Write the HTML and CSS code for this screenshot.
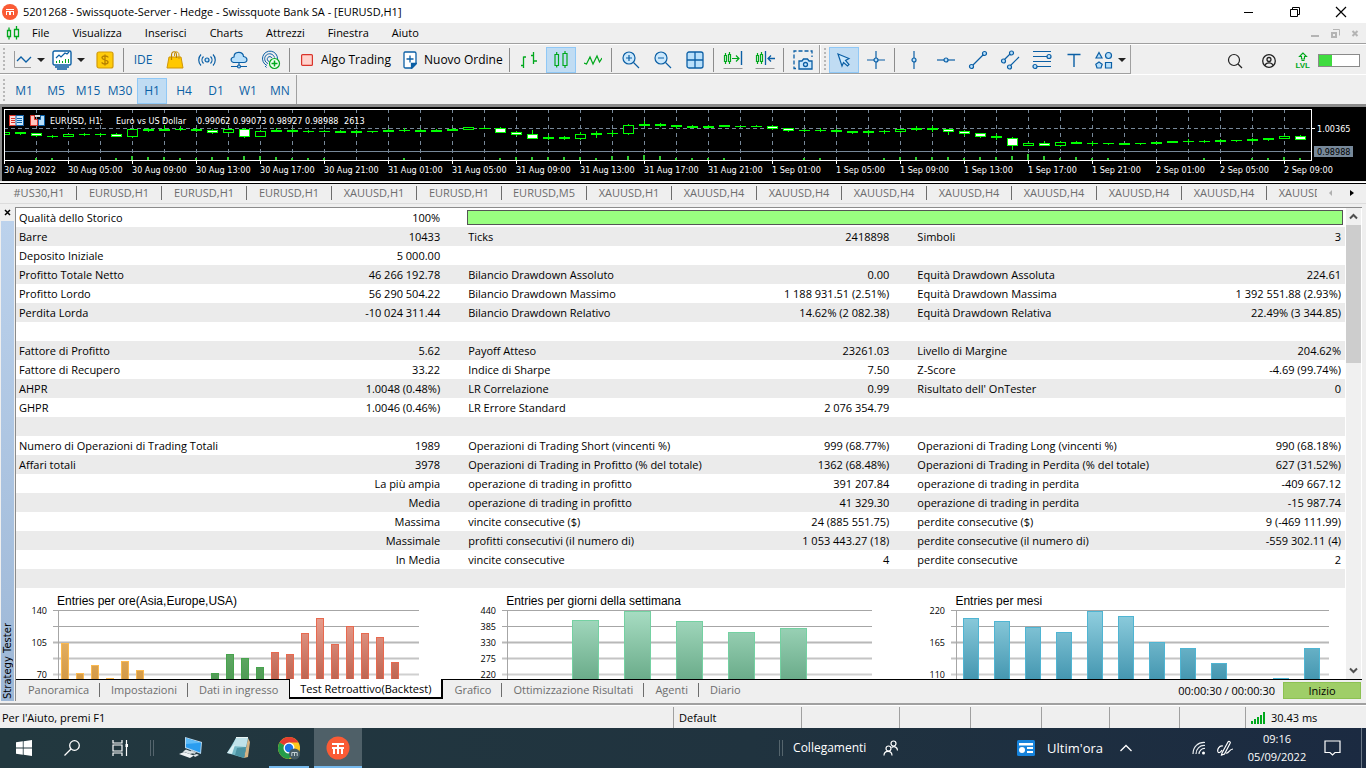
FILE: index.html
```html
<!DOCTYPE html>
<html lang="it">
<head>
<meta charset="utf-8">
<title>5201268 - Swissquote-Server - Hedge</title>
<link rel="stylesheet" href="styles.css">
</head>
<body>
<div class="app">
  <header class="titlebar">
    <svg class="logo" width="16" height="16" viewBox="0 0 16 16"><circle cx="8" cy="8" r="8" fill="#fa5b35"/><path d="M4 5h8v1H4zM4 7h8v1H4zM4 8h1v3H4zM7 8h2v3H7zM11 8h1v3h-1z" fill="#fff" shape-rendering="crispEdges"/></svg>
    <h1 class="title">5201268 - Swissquote-Server - Hedge - Swissquote Bank SA - [EURUSD,H1]</h1>
    <div class="window-controls">
      <button aria-label="Riduci"><svg width="12" height="12"><path d="M1 6.500h9" stroke="#000"/></svg></button>
      <button aria-label="Ripristina"><svg width="12" height="12" fill="none" stroke="#000"><path d="M1.500 3.500h7v7h-7zM3.500 3V1.500h7v7H9"/></svg></button>
      <button aria-label="Chiudi"><svg width="12" height="12"><path d="M1 1l10 10M11 1L1 11" stroke="#000" stroke-width="1.2"/></svg></button>
    </div>
  </header>

  <nav class="menubar">
    <svg class="menu-icon" width="14" height="14" fill="none" stroke="#00a81c" stroke-width="1.3"><path d="M1.500 4.500h3v6h-3zM3 1.500v3M3 10.500v3M8.500 3.500h4v7h-4zM10.500 0v3.500M10.500 10.500v3"/></svg>
    <button>File</button><button>Visualizza</button><button>Inserisci</button><button>Charts</button><button>Attrezzi</button><button>Finestra</button><button>Aiuto</button>
    <div class="mdi-controls">
      <svg width="9" height="9"><path d="M0 7h8" stroke="#b4b4b4" stroke-width="2"/></svg>
      <svg width="9" height="9" fill="none" stroke="#b4b4b4"><path d="M1 4h4v4H1z" stroke-width="2"/><path d="M2 .5h6.500v6"/></svg>
      <svg width="9" height="9"><path d="M1.500 2l5 5M6.500 2l-5 5" stroke="#b4b4b4" stroke-width="2"/></svg>
    </div>
  </nav>

  <div class="toolbar-row">
    <div class="toolbar">
      <span class="grip"></span>
      <button class="drop" aria-label="Grafici"><svg width="20" height="18" fill="none"><path d="M2.500 0v16.500H19" stroke="#9b9b9b"/><path d="M5 10l4-4 5 5 5-5" stroke="#0b5fa5" stroke-width="1.3"/></svg><i class="caret"></i></button>
      <button class="drop wide" aria-label="Indicatori"><svg width="20" height="20" fill="none" stroke="#0b5fa5"><rect x="1" y="1" width="18" height="14" rx="1.500" fill="#fff" stroke-width="1.4"/><path d="M4 8l3-3 2 2 4-4 2 1 2-2" stroke-width="1.200"/><path d="M4.500 13v-2M7.500 13v-3M10.500 13v-2M13.500 13v-4M16.500 13v-4" stroke="#00a81c"/><path d="M3 17h14M5 19h10" stroke-width="1.500"/></svg><i class="caret"></i></button>
      <button class="tool" aria-label="Simboli"><svg width="18" height="18"><rect x="1" y="1" width="16" height="16" rx="2" fill="#ffcc0a" stroke="#d39b07" stroke-width="1.2"/><path d="M12 6.500C12 4.500 6 4.500 6 6.800S12 8.800 12 11.200 6 13.500 6 11.300M9 3.500v11" fill="none" stroke="#b98300" stroke-width="1.4"/></svg></button>
      <span class="sep"></span>
      <button class="tool ide">IDE</button>
      <button class="tool" aria-label="Market"><svg width="18" height="20"><path d="M3 7h12l2 11H1z" fill="#ffc800" stroke="#cf9508"/><path d="M5.500 10V5.500c0-5 5-5 5 0V8" fill="none" stroke="#b98300" stroke-width="1.200"/><path d="M8.500 6V4c0-3 4.500-3 4.500 1v4" fill="none" stroke="#cf9508"/></svg></button>
      <button class="tool" aria-label="Segnali"><svg width="18" height="14" fill="none" stroke="#0b5fa5" stroke-width="1.200"><circle cx="9" cy="7" r="2" fill="#bfe3fb"/><path d="M5.500 3.500c-2 2-2 5 0 7M12.500 3.500c2 2 2 5 0 7M3 1.500c-3 3-3 8 0 11M15 1.500c3 3 3 8 0 11"/></svg></button>
      <button class="tool" aria-label="VPS"><svg width="18" height="18" fill="none" stroke="#0b5fa5" stroke-width="1.200"><path d="M5 11.500C0 11.500 0 6.500 4 6c0-6 9-6 9.500-.5 4.500.5 4.500 6 .5 6z" fill="#b9e0fb"/><path d="M9 12v3M1 15.500h6M11 15.500h6"/><circle cx="9" cy="15.500" r="1.500" fill="#b9e0fb"/></svg></button>
      <button class="tool" aria-label="Depositi"><svg width="20" height="20" fill="none" stroke="#0b5fa5"><path d="M6 15.500A7.500 7.500 0 1 1 16.500 9M7 13.500a5 5 0 1 1 6.500-6M8 11.500a2.500 2.500 0 1 1 3-3.500M4 16l1.500 1.500"/><circle cx="13.500" cy="13.500" r="5" fill="#effff0" stroke="#00a81c" stroke-width="1.200"/><path d="M10.500 13.500h6M13.500 10.500v6" stroke="#00a81c" stroke-width="1.500"/></svg></button>
      <span class="sep"></span>
      <button class="labelled algo"><svg width="12" height="12"><rect x=".6" y=".6" width="10.800" height="10.800" rx="1" fill="#ffd3cd" stroke="#d9342b" stroke-width="1.200"/></svg>Algo Trading</button>
      <button class="labelled order"><svg width="14" height="18" fill="none" stroke="#0b5fa5" stroke-width="1.300"><path d="M2 1h9.500q1.500 0 1.500 1.500V13l-4 4H2.500Q1 17 1 15.500v-13Q1 1 2 1z" fill="#fff"/><path d="M13 12.500L8.500 17v-4.500z" fill="#0b5fa5"/><path d="M3.500 8h7M7 4.500v7"/></svg>Nuovo Ordine</button>
      <span class="sep"></span>
      <button class="tool" aria-label="Barre"><svg width="18" height="18" fill="none" stroke="#00a81c" stroke-width="1.300"><path d="M3.500 17V5.500M3.500 6H6M1 14.500h2.500M13.500 13V1M11 4.500h2.500M13.500 10H17"/></svg></button>
      <button class="tool active" aria-label="Candele"><svg width="16" height="18" fill="none" stroke="#00a81c" stroke-width="1.200"><path d="M2 3.500h3.500v11H2zM3.700 1v2.500M3.700 14.500v2M10 2.500h4v12h-4zM12 0v2.500M12 14.500V17"/></svg></button>
      <button class="tool" aria-label="Linea"><svg width="18" height="14" fill="none" stroke="#00a81c" stroke-width="1.200"><path d="M0 10l2.500 1L6 4l3 7 4-8 2.500 6L18 5"/></svg></button>
      <span class="sep"></span>
      <button class="tool" aria-label="Ingrandisci"><svg width="18" height="18" fill="none" stroke="#0b5fa5" stroke-width="1.200"><circle cx="7" cy="7" r="6" fill="#cbe8fc"/><path d="M11.500 11.500l5.500 5.500M4 7h6M7 4v6"/></svg></button>
      <button class="tool" aria-label="Riduci"><svg width="18" height="18" fill="none" stroke="#0b5fa5" stroke-width="1.200"><circle cx="7" cy="7" r="6" fill="#cbe8fc"/><path d="M11.500 11.500l5.500 5.500M4 7h6"/></svg></button>
      <button class="tool" aria-label="Affianca"><svg width="18" height="18" fill="none" stroke="#0b5fa5" stroke-width="1.300"><rect x="1" y="1" width="16" height="16" rx="2" fill="#b9e0fb"/><path d="M9 1v16M1 9h16"/></svg></button>
      <span class="sep"></span>
      <button class="tool" aria-label="Scorrimento"><svg width="20" height="18" fill="none" stroke="#00a81c"><path d="M1.500 4.500h2v6h-2zM2.500 2v2.500M2.500 10.500V13M5.500 3.500h2v7h-2zM6.500 1v2.500M6.500 10.500V13M9 7.500h7M13 4.500l3 3-3 3" stroke-width="1.200"/><path d="M18.500 0v14" stroke="#0b5fa5" stroke-width="1.400"/><path d="M.5 17.500h19" stroke="#999"/></svg></button>
      <button class="tool" aria-label="Spostamento"><svg width="20" height="18" fill="none" stroke="#00a81c"><path d="M1.500 4.500h2v6h-2zM2.500 2v2.500M2.500 10.500V13M5.500 3.500h2v7h-2zM6.500 1v2.500M6.500 10.500V13" stroke-width="1.200"/><path d="M10.500 0v14M20 7.500h-7M16 4.500l-3 3 3 3" stroke="#0b5fa5" stroke-width="1.300"/><path d="M.5 17.500h19" stroke="#999"/></svg></button>
      <span class="sep"></span>
      <button class="tool" aria-label="Istantanea"><svg width="20" height="20" fill="none" stroke="#0b5fa5" stroke-width="1.300"><path d="M3 18.500H1V1h18v6" stroke-dasharray="4 2"/><path d="M6 11h3l1.500-2h4l1.500 2h3v8H6z" fill="#cbe8fc"/><circle cx="12.500" cy="14.500" r="2"/></svg></button>
    </div>
    <div class="toolbar">
      <span class="grip"></span>
      <button class="tool active" aria-label="Cursore"><svg width="16" height="16"><path d="M2 2l11 4.500-3.500 2 3.500 4-1.500 1.500-4-3.500-1.500 3.500z" fill="#cbe8fc" stroke="#0b5fa5" stroke-width="1.200"/></svg></button>
      <button class="tool" aria-label="Mirino"><svg width="18" height="18" fill="none" stroke="#0b5fa5" stroke-width="1.200"><path d="M9 0v18M0 9h18"/><circle cx="9" cy="9" r="2" fill="#b9e0fb"/></svg></button>
      <span class="sep"></span>
      <button class="tool" aria-label="Linea verticale"><svg width="18" height="20" fill="none" stroke="#0b5fa5" stroke-width="1.200"><path d="M9 1v18"/><circle cx="9" cy="10" r="2" fill="#b9e0fb"/></svg></button>
      <button class="tool" aria-label="Linea orizzontale"><svg width="20" height="18" fill="none" stroke="#0b5fa5" stroke-width="1.200"><path d="M1 9h18"/><circle cx="10" cy="9" r="2" fill="#b9e0fb"/></svg></button>
      <button class="tool" aria-label="Trend"><svg width="20" height="20" fill="none" stroke="#0b5fa5" stroke-width="1.200"><path d="M4 16L16 4"/><circle cx="3.500" cy="16.500" r="2" fill="#b9e0fb"/><circle cx="16.500" cy="3.500" r="2" fill="#b9e0fb"/></svg></button>
      <button class="tool" aria-label="Canale"><svg width="20" height="20" fill="none" stroke="#0b5fa5" stroke-width="1.200"><path d="M4 10l7-7M10 16l9-9"/><circle cx="3.500" cy="11" r="2" fill="#b9e0fb"/><circle cx="11.500" cy="3" r="2" fill="#b9e0fb"/><circle cx="9.500" cy="17" r="2" fill="#b9e0fb"/></svg></button>
      <button class="tool" aria-label="Fibonacci"><svg width="20" height="20" fill="none" stroke="#0b5fa5" stroke-width="1.200"><path d="M1 1.500h18M1 6.500h18M1 11.500h18M1 16.500h18"/><circle cx="17" cy="6.500" r="2" fill="#b9e0fb"/><circle cx="3" cy="16.500" r="2" fill="#b9e0fb"/></svg></button>
      <button class="tool" aria-label="Testo"><svg width="16" height="16" fill="none" stroke="#0b5fa5" stroke-width="1.400"><path d="M1.500 2.500h13M8 2.500V15"/></svg></button>
      <button class="drop" aria-label="Oggetti"><svg width="18" height="18" fill="#b9e0fb" stroke="#0b5fa5" stroke-width="1.200"><path d="M4 1.500L7 7H1z"/><circle cx="13.500" cy="4.500" r="3"/><path d="M4 11l3.200 2.300L6 17H2L.8 13.300z"/><path d="M10.500 11.500h6v5.500h-6z"/></svg><i class="caret"></i></button>
    </div>
    <div class="toolbar-right">
      <svg width="16" height="16" fill="none" stroke="#222" stroke-width="1.200"><circle cx="7" cy="7" r="5.500"/><path d="M11 11l4 4"/></svg>
      <svg width="16" height="16" fill="none" stroke="#222" stroke-width="1.300"><circle cx="8" cy="8" r="6.300"/><circle cx="8" cy="6.500" r="2"/><path d="M4 12.500c1-3.500 7-3.500 8 0"/></svg>
      <div class="lvl"><svg width="10" height="10" fill="none" stroke="#00a81c" stroke-width="1.100"><path d="M5 1L1.500 4.500h2V7h3V4.500h2zM3.500 8.500h3"/></svg><span>LVL</span></div>
      <progress class="level" max="100" value="32" aria-label="Livello"></progress>
    </div>
  </div>

  <div class="toolbar-row frames-row">
    <div class="toolbar frames">
      <span class="grip"></span>
      <button class="tool">M1</button><button class="tool">M5</button><button class="tool">M15</button><button class="tool">M30</button><button class="tool active">H1</button><button class="tool">H4</button><button class="tool">D1</button><button class="tool">W1</button><button class="tool">MN</button>
    </div>
  </div>

  <section class="price-chart">
    <svg id="price" width="100%" height="74" role="img" aria-label="EURUSD H1"></svg>
  </section>

  <nav class="chart-tabs">
    <div class="tab-strip">
      <button>#US30,H1</button><button>EURUSD,H1</button><button>EURUSD,H1</button><button>EURUSD,H1</button><button>XAUUSD,H1</button><button>EURUSD,H1</button><button>EURUSD,M5</button><button>XAUUSD,H1</button><button>XAUUSD,H4</button><button>XAUUSD,H4</button><button>XAUUSD,H4</button><button>XAUUSD,H4</button><button>XAUUSD,H4</button><button>XAUUSD,H4</button><button>XAUUSD,H4</button><button>XAUUSD,H4</button>
    </div>
    <button class="arrow" aria-label="Indietro"><svg width="6" height="8"><path d="M4 1v6L1 4z" fill="#b0b0b0"/></svg></button>
    <button class="arrow" aria-label="Avanti"><svg width="6" height="8"><path d="M1 1v6l4-3z" fill="#000"/></svg></button>
  </nav>

  <main class="tester">
    <aside class="dock">
      <button class="dock-close" aria-label="Chiudi"><svg width="7" height="7"><path d="M1 1l5 5M6 1L1 6" stroke="#000" stroke-width="1.500"/></svg></button>
      <div class="dock-title"><span>Strategy Tester</span></div>
    </aside>
    <div class="tester-body">
      <div class="report-wrap">
        <div class="report">
          <table class="stats">
            <colgroup><col class="c1"><col class="c2"><col class="c1"><col class="c2"><col class="c1"><col class="c3"></colgroup>
            <tbody>
              <tr><td>Qualità dello Storico</td><td>100%</td><td colspan="4" class="quality"><div class="quality-bar"></div></td></tr>
              <tr><td>Barre</td><td>10433</td><td>Ticks</td><td>2418898</td><td>Simboli</td><td>3</td></tr>
              <tr><td>Deposito Iniziale</td><td>5 000.00</td><td></td><td></td><td></td><td></td></tr>
              <tr><td>Profitto Totale Netto</td><td>46 266 192.78</td><td>Bilancio Drawdown Assoluto</td><td>0.00</td><td>Equità Drawdown Assoluta</td><td>224.61</td></tr>
              <tr><td>Profitto Lordo</td><td>56 290 504.22</td><td>Bilancio Drawdown Massimo</td><td>1 188 931.51 (2.51%)</td><td>Equità Drawdown Massima</td><td>1 392 551.88 (2.93%)</td></tr>
              <tr><td>Perdita Lorda</td><td>-10 024 311.44</td><td>Bilancio Drawdown Relativo</td><td>14.62% (2 082.38)</td><td>Equità Drawdown Relativa</td><td>22.49% (3 344.85)</td></tr>
              <tr><td></td><td></td><td></td><td></td><td></td><td></td></tr>
              <tr><td>Fattore di Profitto</td><td>5.62</td><td>Payoff Atteso</td><td>23261.03</td><td>Livello di Margine</td><td>204.62%</td></tr>
              <tr><td>Fattore di Recupero</td><td>33.22</td><td>Indice di Sharpe</td><td>7.50</td><td>Z-Score</td><td>-4.69 (99.74%)</td></tr>
              <tr><td>AHPR</td><td>1.0048 (0.48%)</td><td>LR Correlazione</td><td>0.99</td><td>Risultato dell' OnTester</td><td>0</td></tr>
              <tr><td>GHPR</td><td>1.0046 (0.46%)</td><td>LR Errore Standard</td><td>2 076 354.79</td><td></td><td></td></tr>
              <tr><td></td><td></td><td></td><td></td><td></td><td></td></tr>
              <tr><td>Numero di Operazioni di Trading Totali</td><td>1989</td><td>Operazioni di Trading Short (vincenti %)</td><td>999 (68.77%)</td><td>Operazioni di Trading Long (vincenti %)</td><td>990 (68.18%)</td></tr>
              <tr><td>Affari totali</td><td>3978</td><td>Operazioni di Trading in Profitto (% del totale)</td><td>1362 (68.48%)</td><td>Operazioni di Trading in Perdita (% del totale)</td><td>627 (31.52%)</td></tr>
              <tr><td></td><td>La più ampia</td><td>operazione di trading in profitto</td><td>391 207.84</td><td>operazione di trading in perdita</td><td>-409 667.12</td></tr>
              <tr><td></td><td>Media</td><td>operazione di trading in profitto</td><td>41 329.30</td><td>operazione di trading in perdita</td><td>-15 987.74</td></tr>
              <tr><td></td><td>Massima</td><td>vincite consecutive ($)</td><td>24 (885 551.75)</td><td>perdite consecutive ($)</td><td>9 (-469 111.99)</td></tr>
              <tr><td></td><td>Massimale</td><td>profitti consecutivi (il numero di)</td><td>1 053 443.27 (18)</td><td>perdite consecutive (il numero di)</td><td>-559 302.11 (4)</td></tr>
              <tr><td></td><td>In Media</td><td>vincite consecutive</td><td>4</td><td>perdite consecutive</td><td>2</td></tr>
              <tr><td></td><td></td><td></td><td></td><td></td><td></td></tr>
            </tbody>
          </table>
          <div class="entries">
            <figure><figcaption>Entries per ore(Asia,Europe,USA)</figcaption><svg id="hours" width="100%" height="200"></svg></figure>
            <figure><figcaption>Entries per giorni della settimana</figcaption><svg id="days" width="100%" height="200"></svg></figure>
            <figure><figcaption>Entries per mesi</figcaption><svg id="months" width="100%" height="200"></svg></figure>
          </div>
        </div>
        <div class="scrollbar">
          <button aria-label="Su"><svg width="9" height="7" fill="none" stroke="#505050" stroke-width="2"><path d="M1 5.500l3.500-3.500L8 5.500"/></svg></button>
          <div class="thumb"></div>
          <button aria-label="Giù"><svg width="9" height="7" fill="none" stroke="#505050" stroke-width="2"><path d="M1 1.500L4.500 5 8 1.500"/></svg></button>
        </div>
      </div>
      <div class="tester-foot">
        <nav class="tester-tabs">
          <button>Panoramica</button><button>Impostazioni</button><button class="last">Dati in ingresso</button><button class="current">Test Retroattivo(Backtest)</button><button>Grafico</button><button>Ottimizzazione Risultati</button><button>Agenti</button><button class="last">Diario</button>
        </nav>
        <span class="elapsed">00:00:30 / 00:00:30</span>
        <button class="start">Inizio</button>
      </div>
    </div>
  </main>

  <footer class="status">
    <span class="help">Per l'Aiuto, premi F1</span>
    <span class="profile">Default</span>
    <span class="s98"></span><span class="s71"></span><span class="s71"></span><span class="s68"></span><span class="s70"></span><span class="s66"></span>
    <span class="ping"><svg width="14" height="12" stroke="#00a81c" stroke-width="2"><path d="M1 12V9M4 12V7M7 12V5M10 12V3M13 12V0"/></svg>30.43 ms</span>
  </footer>

  <footer class="taskbar">
    <button aria-label="Start"><svg width="16" height="16" fill="#fff"><path d="M0 2.300L6.800 1.300V7.600H0zM7.600 1.200L16 0v7.600H7.600zM0 8.400h6.800v6.300L0 13.700zM7.600 8.400H16V16l-8.400-1.200z"/></svg></button>
    <button aria-label="Cerca"><svg width="16" height="16" fill="none" stroke="#fff" stroke-width="1.300"><circle cx="10.500" cy="5.500" r="4.800"/><path d="M7 9L.5 15.500"/></svg></button>
    <button aria-label="Attività"><svg width="17" height="16" fill="none" stroke="#fff" stroke-width="1.200"><path d="M1 0v3h9V0M1 16v-3h9v3M1 5h9v6H1zM14.500 0v16"/><path d="M13.500 4h2.500v3h-2.500z" fill="#fff" stroke="none"/></svg></button>
    <span class="handle"></span>
    <button aria-label="Computer"><svg width="24" height="24"><path d="M6 1l17 5-1 12-16-6z" fill="#b9d9ef"/><path d="M7 2.200L22 6.700 21.200 16.500 7 11.300z" fill="#2a9df0"/><path d="M7 2.200L22 6.700 7 8z" fill="#5fbcf8"/><path d="M12 14l5 2-1 2-5-1z" fill="#c4ccd1"/><path d="M7 13.500l8 3-4 1.500-7-2.500z" fill="#dfe5e8"/><path d="M0 18l5-2 10 3.500-4 2.500z" fill="#eef1f3"/><path d="M14 19l4-1 2 1-4 2z" fill="#dfe5e8"/></svg></button>
    <button aria-label="Blocco note"><svg width="24" height="24"><path d="M21 2l2 4-2 15-4 1z" fill="#d5b384"/><path d="M9 2h12l-4 20L0 17z" fill="#74b8c6"/><path d="M9 2h12l-2 9L5 10z" fill="#bfe2ea"/><path d="M5 10l3-1-3 9-5-1z" fill="#d9eff3"/><path d="M10 12l9-1-2 11-9-3z" fill="#4b93a3"/><path d="M9 2h12v-1H9z" fill="#e9f4f4"/></svg></button>
    <button class="running" aria-label="Chrome"><svg width="24" height="24"><circle cx="12" cy="12" r="11" fill="#fbc91f"/><path d="M12 12L2.500 6.500A11 11 0 0 1 21.500 6.500H12z" fill="#e43d30"/><path d="M12 12L2.500 6.500A11 11 0 0 0 12 23l5-8z" fill="#259b4a"/><circle cx="12" cy="12" r="5.500" fill="#fff"/><circle cx="12" cy="12" r="4.200" fill="#1a73e8"/><circle cx="17.500" cy="18" r="5.500" fill="#455a64"/><path d="M14.800 20v-3.500h5.400V20M17.500 16.500V20" stroke="#c5d0d5" fill="none"/></svg></button>
    <button class="focused" aria-label="MetaTrader 5"><svg width="24" height="24"><circle cx="12" cy="12" r="11.500" fill="#fa5b35"/><path d="M6 7h12v2H6zM6 11h12v2H6zM7 13h2v5H7zM11 9h2v9h-2zM15 13h2v5h-2z" fill="#fff" shape-rendering="crispEdges"/></svg></button>
    <span class="spacer"></span>
    <span class="handle"></span>
    <span class="links">Collegamenti</span>
    <button class="people" aria-label="Contatti"><svg width="16" height="16" fill="none" stroke="#fff" stroke-width="1.200"><circle cx="10.500" cy="3.500" r="2.500"/><circle cx="5.500" cy="8.500" r="2.500"/><path d="M1 15.500c0-5.500 8-5.500 8 0M8.500 7.500c3-2 6 0 6 3"/></svg></button>
    <button class="news"><svg width="19" height="16"><rect width="18" height="16" rx="1.500" fill="#1683dc"/><path d="M2 3h14v2.500H2z" fill="#fff"/><circle cx="5" cy="10" r="3" fill="#fff"/><path d="M10 8h6M10 12h6" stroke="#fff" stroke-width="1.800"/></svg><span>Ultim'ora</span></button>
    <button class="chevron" aria-label="Mostra icone"><svg width="12" height="8" fill="none" stroke="#fff" stroke-width="1.300"><path d="M.5 7L6 1.500 11.500 7"/></svg></button>
    <span class="tray">
      <svg width="14" height="14" fill="none" stroke="#e9edf0" stroke-width="1.200"><path d="M1 13C1 6 6 1 13 1.500M4 13c0-5 4-9 9-8.500M7 13c0-3 3-6 6-5.500"/><circle cx="11.500" cy="12" r="1.500" fill="#fff" stroke="none"/></svg>
      <svg width="17" height="16" fill="none" stroke="#fff" stroke-width="1.200"><path d="M5 13l6-11c1-1.500 3 0 2 1.500L7.500 14l-3 1zM6 6c-4-1-6 4-5 6 1 1.500 3 0 4-2M9 13c3 1 3-4 7-4"/></svg>
    </span>
    <time class="clock"><span>09:16</span><span>05/09/2022</span></time>
    <button class="notify" aria-label="Notifiche"><svg width="17" height="16" fill="none" stroke="#fff" stroke-width="1.200"><path d="M1 1h15v11.500h-5L8.500 15 6 12.500H1z"/></svg></button>
    <span class="peek"></span>
  </footer>
</div>
<script src="app.js"></script>
</body>
</html>
```
FILE: styles.css
```css
* { box-sizing: border-box; }
body { margin: 0; background: #efefef; color: #000; font: 11px/16px "Open Sans", "Noto Sans", sans-serif; }
button { font: inherit; color: inherit; background: none; border: 0; padding: 0; margin: 0; }
svg { display: block; flex: none; }
.app { height: 100vh; display: flex; flex-direction: column; overflow: hidden; }
.app > * { flex: none; }

.titlebar { height: 23px; display: flex; align-items: center; background: #fff; padding-left: 2px; }
.title { margin: 0 auto 0 5px; font-size: 11px; font-weight: 400; white-space: nowrap; }
.window-controls { display: flex; padding-right: 2px; }
.window-controls button { width: 46px; height: 22px; display: grid; place-items: center; }

.menubar { height: 21px; display: flex; align-items: center; border-bottom: 1px solid #a0a0a0; padding-left: 6px; }
.menu-icon { margin-right: 3px; }
.menubar button { padding: 0 9px; margin-right: 5px; }
.mdi-controls { margin-left: auto; display: flex; gap: 11px; padding-right: 6px; }

.toolbar-row { height: 31px; display: flex; align-items: stretch; border-top: 1px solid #fff; border-bottom: 1px solid #fff; }
.toolbar { display: flex; align-items: center; border-right: 1px solid #a0a0a0; border-bottom: 1px solid #a0a0a0; padding-top: 1px; }
.toolbar + .toolbar { border-left: 1px solid #fff; }
.grip { width: 2px; height: 24px; margin: 0 3px; background: repeating-linear-gradient(#b8b8b8 0 2px, transparent 2px 4px); }
.toolbar + .toolbar .grip { margin-right: 2px; }
.tool, .drop { height: 26px; display: grid; place-items: center; }
.tool { width: 30px; margin: 0 1px; color: #0b5fa5; }
.tool.active { background: #c0dcf3; border: 1px solid #90c8f6; }
.drop { width: 40px; display: flex; align-items: center; justify-content: center; gap: 5px; }
.drop.wide { width: 41px; }
.caret { border: 4px solid transparent; border-top-color: #222; border-bottom: 0; }
.ide { font-size: 12px; }
.sep { width: 1px; height: 24px; margin: 0 3px 0 2px; background: #8c8c8c; }
.labelled { display: flex; align-items: center; font-size: 12px; white-space: nowrap; }
.algo { width: 103px; gap: 8px; padding-left: 8px; }
.order { width: 111px; gap: 7px; padding-left: 7px; }
.toolbar-right { margin-left: auto; display: flex; align-items: center; gap: 18px; padding: 2px 6px 0 0; }
.lvl { display: grid; justify-items: center; color: #00a81c; font: 700 8px/8px "Liberation Sans", sans-serif; margin-right: -10px; }
.level { appearance: none; width: 42px; height: 13px; border: 1px solid #8a8a8a; background: #fff; }
.level::-webkit-progress-bar { background: #fff; }
.level::-webkit-progress-value { background: #3fdc3f; }
.frames-row { height: 29px; border: 0; }
.frames { border-bottom: 0; padding-top: 2px; }
.frames .tool { font-size: 12px; }

.price-chart { border-top: 3px solid #8b8b8b; border-left: 2px solid #8b8b8b; background: #000; font: 9px/12px "DejaVu Sans Condensed", "DejaVu Sans", sans-serif; }
.price-chart text { fill: #fff; }
.price-chart .last-price { fill: #000; }

.chart-tabs { height: 22px; display: flex; border-top: 1px solid #fff; border-bottom: 1px solid #dcdcdc; margin-top: 1px; box-shadow: inset 0 1px #000; padding-right: 4px; }
.tab-strip { flex: 1; display: flex; align-items: center; overflow: hidden; color: #6d6d6d; padding-left: 2px; margin-right: 3px; }
.tab-strip button { flex: 0 0 85px; height: 14px; line-height: 14px; border-right: 1px solid #6d6d6d; white-space: nowrap; }
.tab-strip button:first-child { flex-basis: 75px; }
.arrow { width: 21px; display: grid; place-items: center; }

.app > .tester { flex: 1; min-height: 0; display: flex; padding: 3px 0 2px; }
.dock { width: 15px; display: flex; flex-direction: column; padding: 0 1px; }
.dock-close { height: 14px; display: grid; place-items: start center; padding-top: 2px; }
.dock-title { flex: 1; background: linear-gradient(#bcd2ec, #9db7d6); display: flex; align-items: flex-end; justify-content: center; padding-bottom: 2px; }
.dock-title span { writing-mode: vertical-rl; transform: rotate(180deg); font: 10px/13px "DejaVu Sans", sans-serif; white-space: nowrap; }
.tester-body { flex: 1; min-width: 0; display: flex; flex-direction: column; border-left: 1px solid #8b8b8b; }
.report-wrap { flex: 1; min-height: 0; display: flex; border-top: 1px solid #8b8b8b; border-bottom: 1px solid #000; background: #fff; margin-right: 4px; }
.report { flex: 1; min-width: 0; overflow: hidden; }
.stats { width: 100%; table-layout: fixed; border-collapse: collapse; }
.c1 { width: 19.6%; }
.c2 { width: 14.2%; }
.stats tr:nth-child(even) { background: #ebebeb; }
.stats td { height: 19px; padding: 2px 0 1px 3px; line-height: 16px; white-space: nowrap; }
.stats td:nth-child(even) { text-align: right; padding: 2px 25px 1px 0; }
.stats td:last-child { padding-right: 4px; }
.stats td.quality { padding: 0 2px; }
.quality-bar { height: 15px; background: #99ff80; border: 1px solid #555; }
.entries { display: grid; grid-template-columns: 33.8% 33.8% 1fr; padding-top: 5px; }
.entries figure { margin: 0; min-width: 0; }
.entries svg { overflow: visible; }
figcaption { padding-left: 41px; font: 12px/16px "Liberation Sans", sans-serif; }
.entries text { font-size: 9px; }
.scrollbar { width: 17px; display: flex; flex-direction: column; background: #f0f0f0; border-left: 1px solid #fff; border-right: 1px solid #fff; }
.scrollbar button { height: 17px; display: grid; place-items: center; }
.thumb { height: 138px; margin-bottom: auto; background: #cdcdcd; }

.tester-foot { height: 21px; display: flex; align-items: center; padding-right: 5px; }
.tester-tabs { align-self: flex-start; display: flex; align-items: flex-start; margin-right: auto; padding-left: 1px; color: #6d6d6d; }
.tester-tabs button { height: 14px; line-height: 14px; margin-top: 3px; padding: 0 10px 0 11px; border-right: 1px solid #6d6d6d; white-space: nowrap; }
.tester-tabs .last { border-right: 0; }
.tester-tabs .current { height: 20px; margin: -1px 0 0 1px; line-height: 20px; color: #000; background: #fff; border: 1px solid #000; border-top: 0; padding: 0 10px; border-right-width: 2px; border-bottom-width: 2px; }
.elapsed { margin-right: 8px; }
.start { width: 78px; height: 17px; line-height: 15px; background: #9fce68; border: 1px solid #8cc152; }

.status { height: 25px; display: flex; align-items: stretch; border-top: 2px solid #a0a0a0; line-height: 22px; padding-top: 2px; box-shadow: inset 0 1px #fff; }
.status span { border-left: 1px solid #a0a0a0; padding-left: 5px; }
.status .help { flex: 1; border: 0; padding-left: 2px; }
.profile { width: 128px; }
.s98 { width: 98px; } .s71 { width: 71px; } .s68 { width: 68px; } .s70 { width: 70px; } .s66 { width: 66px; }
.ping { width: 121px; display: flex; align-items: center; gap: 6px; }

.taskbar { height: 40px; display: flex; align-items: center; background: linear-gradient(90deg, #22383f, #20333f 55%, #1b2a41); color: #fff; }
.taskbar button { width: 48px; height: 40px; display: grid; place-items: center; }
.handle { width: 4px; height: 16px; margin: 0 13px 0 6px; border: 1px solid #55656d; border-width: 0 1px; }
.taskbar .running { width: 40px; margin: 0 5px 0 6px; border-bottom: 2px solid #76b9ed; padding-top: 2px; }
.taskbar .focused { background: #4f6068; border-bottom: 2px solid #76b9ed; padding-top: 2px; }
.spacer { flex: 1; }
.links { width: 82px; font-size: 12px; margin-left: -3px; }
.taskbar .people { width: 32px; }
.taskbar .news { width: auto; display: flex; align-items: center; gap: 11px; margin-left: 110px; font-size: 13px; }
.taskbar .chevron { width: 46px; }
.tray { display: flex; align-items: center; gap: 11px; margin-left: 43px; }
.clock { width: 86px; display: grid; justify-items: center; line-height: 18px; }
.taskbar .notify { width: 24px; margin: 0 17px 0 0; }
.peek { width: 5px; height: 40px; border-left: 1px solid #6b7887; }
```
FILE: app.js
```js
// Candles: kind (f = flat, w = bearish, o = bullish, t = doji), body top/bottom, wick top/bottom,
// in thirds of a pixel below the top edge of the chart frame.
const candles = `o 84 93 84 93|f 85 90 85 92|w 87 97 87 99|t 97 97 94 101|o 90 98 90 99|t 91 91 87 96|t 91 91 88 95|w 90 98 87 99|o 76 98 76 102|f 75 81 72 83|f 75 81 63 81|t 76 76 66 81|f 75 81 72 83|w 78 86 75 89|o 76 87 72 90|w 76 98 72 102|o 82 98 79 98|f 78 84 73 84|f 78 84 76 87|t 82 82 78 87|t 82 82 78 85|f 81 87 78 88|f 81 87 78 90|t 82 82 80 87|f 78 84 75 84|t 79 79 72 84|f 78 84 75 84|f 78 84 75 84|f 75 81 73 82|o 70 77 70 77|t 73 73 70 76|w 72 86 69 87|w 85 93 82 96|w 91 104 78 104|f 99 105 93 108|f 99 105 96 108|o 91 104 85 107|f 87 93 81 101|t 88 88 78 97|o 64 89 60 93|f 60 66 51 66|f 60 66 58 69|f 63 69 62 76|f 66 72 63 73|f 66 72 63 73|f 63 69 62 70|t 67 67 66 69|t 67 67 63 70|w 66 74 63 77|w 73 80 71 83|t 79 79 75 83|t 79 79 73 84|f 78 84 75 87|f 81 87 81 91|f 81 87 79 93|t 82 82 78 90|o 76 83 74 87|f 72 78 66 81|f 72 78 66 83|w 76 83 75 93|w 82 89 77 95|w 88 98 88 101|f 96 102 91 107|w 103 125 99 137|o 118 125 115 126|w 118 125 112 126|o 115 125 112 129|f 114 120 111 120|t 118 118 112 125|t 118 118 117 123|f 117 123 117 123|t 118 118 117 123|f 114 120 114 120|f 111 117 111 117|t 112 112 106 117|t 112 112 108 117|f 108 114 105 115|t 109 109 108 114|f 105 111 102 113|f 102 108 102 111|o 97 103 94 106|w 97 107 94 108`.split('|').map(s => s.split(' '));
const volumes = '0022000243322334432220000200000233333244542222000022000233332334642322000002002232';
const times = ['30 Aug 2022', '30 Aug 05:00', '30 Aug 09:00', '30 Aug 13:00', '30 Aug 17:00', '30 Aug 21:00', '31 Aug 01:00', '31 Aug 05:00', '31 Aug 09:00', '31 Aug 13:00', '31 Aug 17:00', '31 Aug 21:00', '1 Sep 01:00', '1 Sep 05:00', '1 Sep 09:00', '1 Sep 13:00', '1 Sep 17:00', '1 Sep 21:00', '2 Sep 01:00', '2 Sep 05:00', '2 Sep 09:00'];
const heading = [[48, 'EURUSD, H1:'], [114, 'Euro vs US Dollar'], [195, '0.99062'], [231, '0.99073'], [267, '0.98927'], [303, '0.98988'], [342, '2613']];

function drawPrice() {
  const svg = document.getElementById('price');
  const right = svg.clientWidth - 55;
  const x = i => 2 + 16 * i;
  const y = v => Math.round(Number(v) / 3) - 3;
  let out = '<g shape-rendering="crispEdges">';
  for (let gx = 34; gx < right; gx += 32) out += `<path d="M${gx}.5 2V53" stroke="#778899" stroke-dasharray="4 4"/>`;
  out += `<path d="M2 21.500H${right}" stroke="#778899" stroke-dasharray="4 3"/><path d="M2 44.500H${right}" stroke="#778899"/>`;
  candles.forEach(([kind, top, bottom, high, low], i) => {
    const cx = x(i), t = y(top), h = Math.max(1, y(bottom) - t);
    const left = i ? cx - 5 : cx, w = i ? 11 : 6;
    out += `<path d="M${cx}.5 ${y(high)}V${Math.max(y(low), y(high) + 1)}" stroke="#0f0"/>`;
    if (kind === 'f' || kind === 't') out += `<rect x="${left}" y="${t}" width="${w}" height="${h}" fill="#0f0"/>`;
    else out += `<rect x="${left}.5" y="${t}.5" width="${w - 1}" height="${Math.max(2, h - 1)}" fill="${kind === 'w' ? '#fff' : '#000'}" stroke="#0f0"/>`;
    const v = Number(volumes[i]);
    if (v) out += `<rect x="${cx - 1}" y="${53 - v}" width="2" height="${v}" fill="#32cd32"/>`;
  });
  out += `<path d="M2.500 2.500H${right}.5V53.500H2.500zM${right} 21.500h4" fill="none" stroke="#fff"/>`;
  times.forEach((t, i) => { out += `<path d="M${2 + 64 * i}.5 53v4" stroke="#fff"/>`; });
  out += '</g>';
  times.forEach((t, i) => { out += `<text x="${2 + 64 * i}" y="66">${t}</text>`; });
  out += `<text x="${right + 6}" y="25">1.00365</text><rect x="${right + 3}" y="39" width="39" height="11" fill="#778899"/><text class="last-price" x="${right + 6}" y="48">0.98988</text>`;
  out += '<g><rect x="7.500" y="8.500" width="14" height="10" fill="#ffdcd8" stroke="#d9342b"/><path d="M14 8.500h7.500v10H14z" fill="#cbe8fc" stroke="#0b5fa5"/><path d="M9 11.500h4M9 13.500h4M9 15.500h4" stroke="#d9342b"/><path d="M15 11.500h5M15 13.500h5M15 15.500h5" stroke="#0b5fa5"/><path d="M28.500 8.500h4v4h3v6h-7z" fill="#ffc5bf" stroke="#d9342b"/><path d="M42.500 8.500h-4v4h-2v6h6z" fill="#b9e0fb" stroke="#0b5fa5"/><path d="M33 8h5v2h-5z" fill="#ddd"/></g>';
  heading.forEach(([hx, t]) => { out += `<text x="${hx}" y="17">${t}</text>`; });
  svg.innerHTML = out;
}

// Column charts: y values are pixels below the top of the plot.
function drawColumns(id, o) {
  const grid = [1, 17, 33, 49, 65];
  let out = `<defs>${o.colors.map((c, i) => `<linearGradient id="${id}${i}" gradientUnits="userSpaceOnUse" x1="0" y1="0" x2="0" y2="80"><stop offset="0" stop-color="${c[1]}"/><stop offset="1" stop-color="${c[2]}"/></linearGradient>`).join('')}</defs>`;
  grid.forEach((y, i) => { out += `<path d="M${o.axis - 5} ${y}.500H${o.end}" stroke="${['#a6a6a6', '#a6a6a6', '#b8b8b8', '#c4c4c4', '#d0d0d0'][i]}" stroke-width="${i < 2 ? 1 : 2}"/>`; });
  o.labels.forEach((t, i) => { out += `<text x="${o.axis - 11}" y="${grid[i * o.every] + 4}" text-anchor="end">${t}</text>`; });
  out += `<path d="M${o.axis}.500 2V200" stroke="#a6a6a6"/>`;
  o.bars.forEach(([slot, top, c]) => {
    const x = o.first + slot * o.step;
    out += `<rect x="${x}.500" y="${top}.500" width="${o.width - 1}" height="180" fill="url(#${id}${c || 0})" stroke="${o.colors[c || 0][0]}"/>`;
  });
  document.getElementById(id).innerHTML = out;
}

drawColumns('hours', {
  axis: 42, end: 403, first: 45, step: 15, width: 8, every: 2, labels: [140, 105, 70],
  colors: [['#fbb94f', '#f0c078', '#cf943f'], ['#47a34d', '#79c27c', '#4a9450'], ['#e8694f', '#eda596', '#b85c47']],
  bars: [[0, 34], [1, 64], [2, 56], [3, 69], [4, 52], [5, 61], [10, 64, 1], [11, 45, 1], [12, 49, 1], [13, 58, 1], [14, 43, 2], [15, 45, 2], [16, 24, 2], [17, 9, 2], [18, 35, 2], [19, 17, 2], [20, 24, 2], [21, 28, 2], [22, 53, 2]]
});
drawColumns('days', {
  axis: 42, end: 407, first: 107, step: 52, width: 27, every: 1, labels: [440, 385, 330, 275, 220],
  colors: [['#74d1a2', '#a9dec4', '#62a582']],
  bars: [[0, 11], [1, 2], [2, 12], [3, 23], [4, 19]]
});
drawColumns('months', {
  axis: 42, end: 415, first: 49, step: 31, width: 16, every: 2, labels: [220, 165, 110],
  colors: [['#4fb5d3', '#92d0e0', '#3a8faa']],
  bars: [[0, 9], [1, 12], [2, 18], [3, 23], [4, 2], [5, 7], [6, 33], [7, 39], [8, 54], [10, 69], [11, 39]]
});
drawPrice();
window.addEventListener('resize', drawPrice);
```
